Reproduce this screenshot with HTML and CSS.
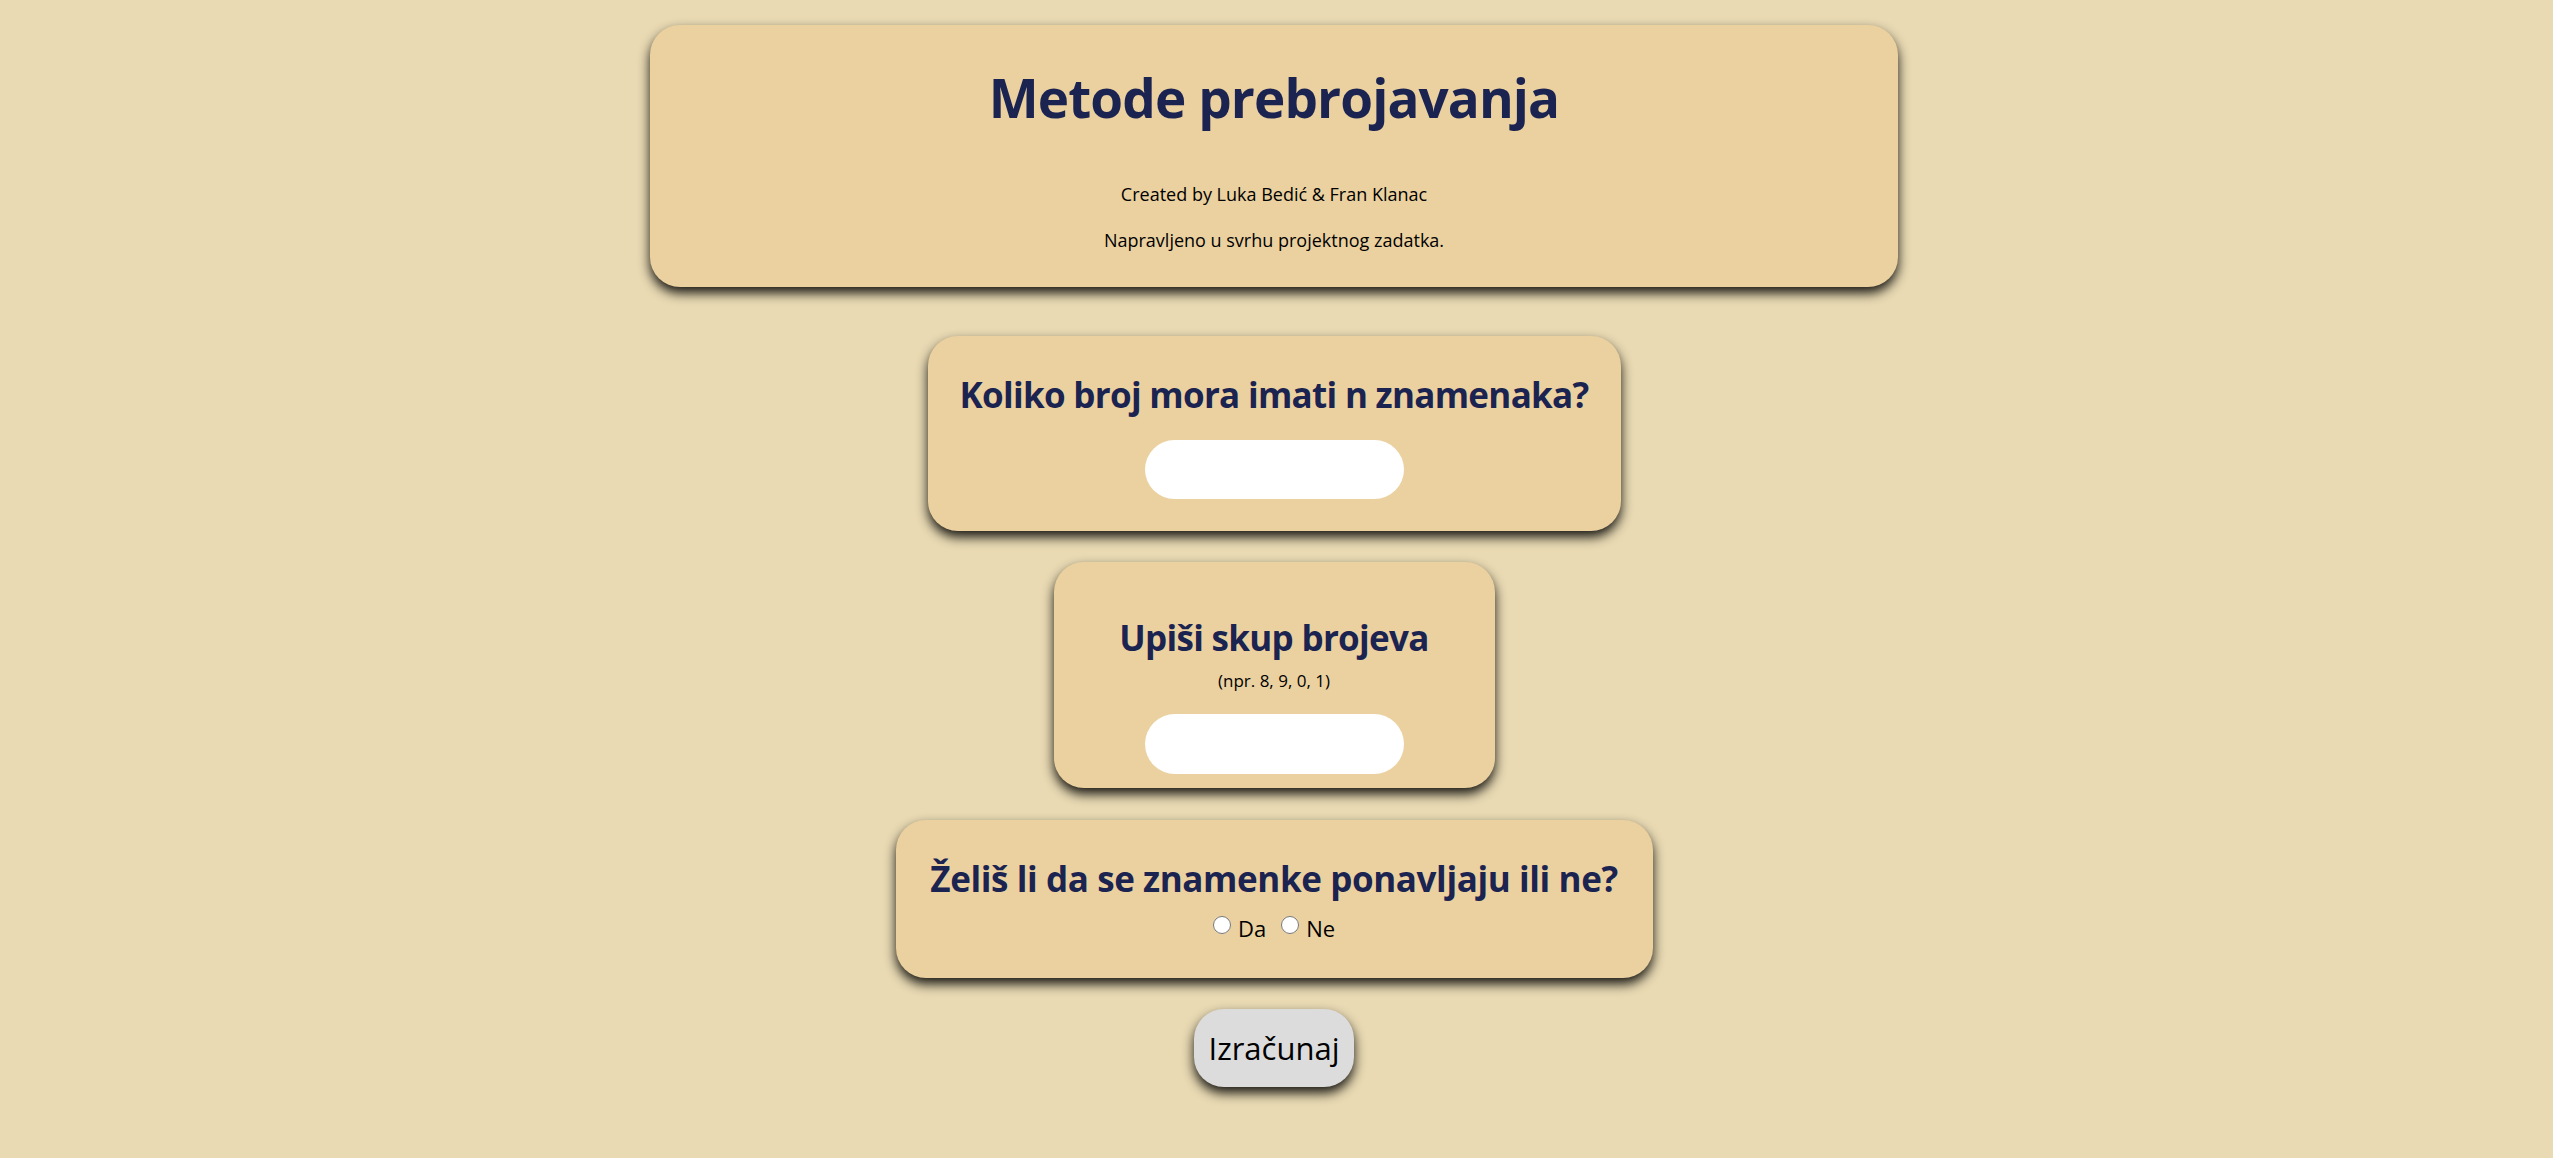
FILE: index.html
```html
<!DOCTYPE html>
<html lang="hr">
<head>
<meta charset="utf-8">
<title>Metode prebrojavanja</title>
<link rel="stylesheet" href="styles.css">
</head>
<body>
<main class="page">
  <header class="card card--intro">
    <h1 class="title">Metode prebrojavanja</h1>
    <p class="credit credit--first">Created by Luka Bedić &amp; Fran Klanac</p>
    <p class="credit credit--second">Napravljeno u svrhu projektnog zadatka.</p>
  </header>

  <section class="card card--digits">
    <h2 class="question">Koliko broj mora imati n znamenaka?</h2>
    <input class="field" type="text" aria-label="Broj znamenaka">
  </section>

  <section class="card card--set">
    <h2 class="question question--set">Upiši skup brojeva</h2>
    <p class="hint">(npr. 8, 9, 0, 1)</p>
    <input class="field field--set" type="text" aria-label="Skup brojeva">
  </section>

  <section class="card card--repeat">
    <h2 class="question question--repeat">Želiš li da se znamenke ponavljaju ili ne?</h2>
    <div class="choices">
      <label class="choice"><input class="radio" type="radio" name="rep" value="da"><span>Da</span></label>
      <label class="choice"><input class="radio" type="radio" name="rep" value="ne"><span>Ne</span></label>
    </div>
  </section>

  <button class="calc" type="button">Izračunaj</button>
</main>
</body>
</html>
```

FILE: styles.css
```css
html, body {
  margin: 0;
  padding: 0;
}

body {
  background: #e9dab3;
  font-family: "Open Sans", "Noto Sans", "DejaVu Sans", sans-serif;
  color: #000;
  min-height: 100vh;
}

.page {
  display: flex;
  flex-direction: column;
  align-items: center;
  padding-top: 25px;
  padding-right: 5px;
}

.card {
  box-sizing: border-box;
  background: #ebd1a0;
  border-radius: 30px;
  box-shadow: 0 6px 12px rgba(0, 0, 0, 0.9);
  display: flex;
  flex-direction: column;
  align-items: center;
  text-align: center;
}

.card--intro {
  width: 1248px;
  height: 262px;
  padding-top: 38px;
}

.card--digits {
  width: 693px;
  height: 195px;
  margin-top: 49px;
  padding-top: 35px;
}

.card--set {
  width: 441px;
  height: 226px;
  margin-top: 31px;
  padding-top: 52px;
}

.card--repeat {
  width: 757px;
  height: 158px;
  margin-top: 32px;
  padding-top: 35px;
}

.title {
  margin: 0;
  font-size: 53px;
  line-height: 70px;
  font-weight: 700;
  letter-spacing: -0.9px;
  color: #1b2350;
}

.credit {
  margin: 0;
  font-size: 18px;
  line-height: 24px;
  font-weight: 500;
  letter-spacing: 0;
}

.credit--first {
  margin-top: 49px;
}

.credit--second {
  margin-top: 22px;
}

.question {
  margin: 0;
  font-size: 35px;
  line-height: 48px;
  font-weight: 700;
  letter-spacing: -0.7px;
  color: #1b2350;
  white-space: nowrap;
}

.question--repeat {
  letter-spacing: -0.4px;
}

.hint {
  margin: 7px 0 0;
  font-size: 17px;
  line-height: 24px;
  font-weight: 500;
}

.field {
  box-sizing: border-box;
  width: 259px;
  height: 59px;
  margin-top: 21px;
  border: none;
  border-radius: 30px;
  background: #fff;
  outline: none;
}

.field--set {
  height: 60px;
}

.choices {
  display: flex;
  align-items: center;
  gap: 15px;
  margin-top: 11px;
  height: 28px;
}

.choice {
  display: flex;
  align-items: center;
  gap: 7px;
  font-size: 22px;
  line-height: 28px;
  font-weight: 500;
}

.radio {
  width: 18px;
  height: 18px;
  margin: -6px 0 0;
}

.calc {
  box-sizing: border-box;
  margin-top: 31px;
  width: 160px;
  height: 78px;
  padding: 0;
  border: none;
  border-radius: 30px;
  background: #dcdcdc;
  box-shadow: 0 6px 12px rgba(0, 0, 0, 0.9);
  font-family: "Open Sans", "Noto Sans", "DejaVu Sans", sans-serif;
  font-size: 31px;
  font-weight: 500;
  color: #000;
}
```
